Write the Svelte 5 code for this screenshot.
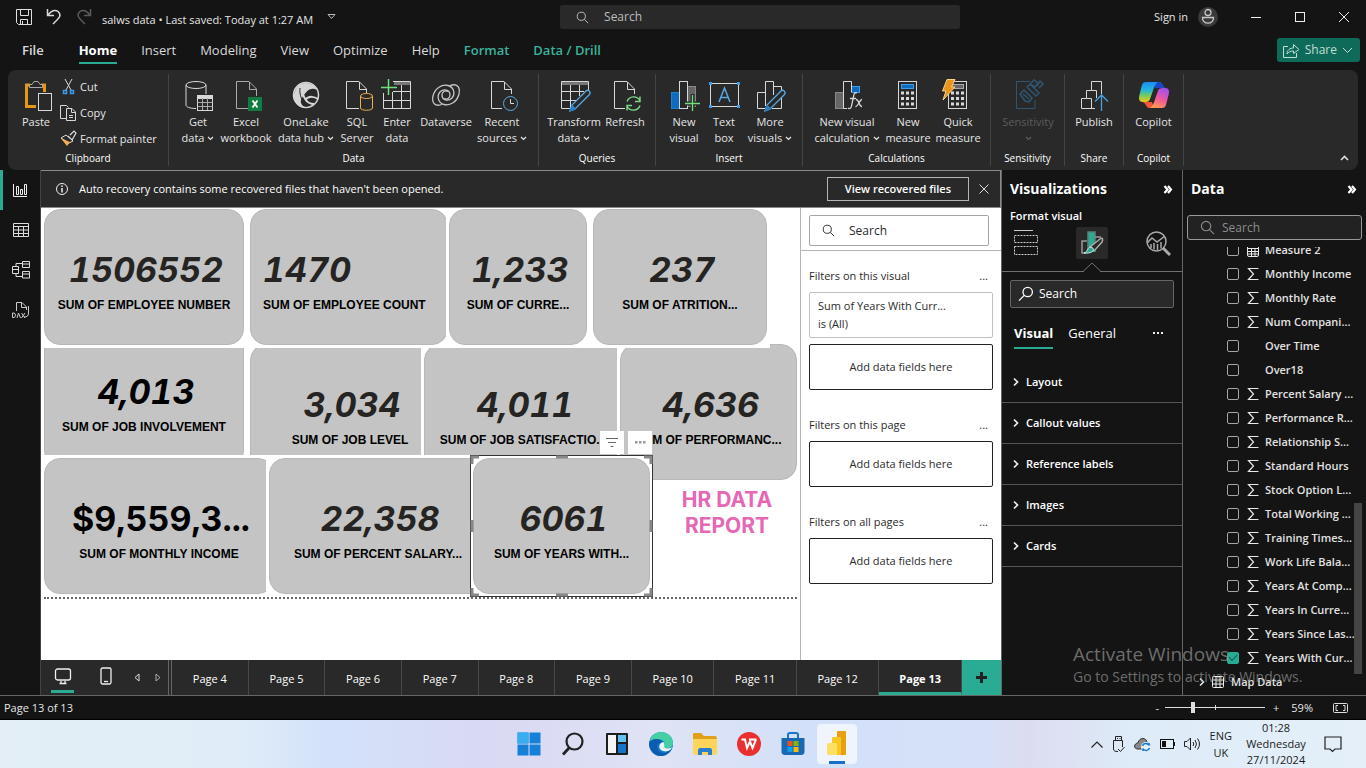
<script>
  const tabs = ['Insert', 'Modeling', 'View', 'Optimize', 'Help'];
  const groups = [
    {
      name: 'Data', width: 370, pad: 9, items: [
        { icon: 'getdata', lines: ['Get', 'data'], width: 40, menu: true },
        { icon: 'excel', lines: ['Excel', 'workbook'], width: 56 },
        { icon: 'onelake', lines: ['OneLake', 'data hub'], width: 64, menu: true },
        { icon: 'sql', lines: ['SQL', 'Server'], width: 38 },
        { icon: 'enter', lines: ['Enter', 'data'], width: 42 },
        { icon: 'dataverse', lines: ['Dataverse'], width: 56 },
        { icon: 'recent', lines: ['Recent', 'sources'], width: 56, menu: true }
      ]
    },
    {
      name: 'Queries', width: 117, pad: 6, items: [
        { icon: 'transform', lines: ['Transform', 'data'], width: 58, menu: true },
        { icon: 'refresh', lines: ['Refresh'], width: 44 }
      ]
    },
    {
      name: 'Insert', width: 147, pad: 8, items: [
        { icon: 'newvisual', lines: ['New', 'visual'], width: 40 },
        { icon: 'textbox', lines: ['Text', 'box'], width: 40 },
        { icon: 'morevisuals', lines: ['More', 'visuals'], width: 52, menu: true }
      ]
    },
    {
      name: 'Calculations', width: 188, pad: 7, items: [
        { icon: 'viscalc', lines: ['New visual', 'calculation'], width: 74, menu: true },
        { icon: 'measure', lines: ['New', 'measure'], width: 48 },
        { icon: 'quick', lines: ['Quick', 'measure'], width: 52 }
      ]
    },
    { name: 'Sensitivity', width: 74, pad: 8, items: [{ icon: 'sensitivity', lines: ['Sensitivity', ''], width: 58, menu: true, off: true }] },
    { name: 'Share', width: 59, pad: 4, items: [{ icon: 'publish', lines: ['Publish'], width: 50 }] },
    { name: 'Copilot', width: 60, pad: 4, items: [{ icon: 'copilot', lines: ['Copilot'], width: 51 }] }
  ];

  // Visuals on the report canvas: position and size in canvas units.
  const visuals = [
    { x: 0, y: 120, w: 206, z: 1, value: '4,013', label: 'SUM OF JOB INVOLVEMENT', dark: true },
    { x: 206, y: 133, w: 206, z: 1, value: '3,034', label: 'SUM OF JOB LEVEL' },
    { x: 380, y: 133, w: 204, z: 1, value: '4,011', label: 'SUM OF JOB SATISFACTIO...' },
    { x: 576, y: 133, w: 183, z: 1, value: '4,636', label: 'SUM OF PERFORMANC...' },
    { x: 0, y: -2, w: 206, z: 2, value: '1506552', label: 'SUM OF EMPLOYEE NUMBER' },
    { x: 206, y: -2, w: 204, z: 2, value: '1470', label: 'SUM OF EMPLOYEE COUNT', left: true },
    { x: 405, y: -2, w: 144, z: 2, value: '1,233', label: 'SUM OF CURRE...' },
    { x: 549, y: -2, w: 180, z: 2, value: '237', label: 'SUM OF ATRITION...' },
    { x: 0, y: 247, w: 236, z: 3, value: '$9,559,3...', label: 'SUM OF MONTHLY INCOME', dark: true, upright: true },
    { x: 225, y: 247, w: 224, z: 3, value: '22,358', label: 'SUM OF PERCENT SALARY...' },
    { x: 429, y: 247, w: 183, z: 4, value: '6061', label: 'SUM OF YEARS WITH...', selected: true }
  ];

  const pages = ['Page 4', 'Page 5', 'Page 6', 'Page 7', 'Page 8', 'Page 9', 'Page 10', 'Page 11', 'Page 12', 'Page 13'];
  const sections = ['Layout', 'Callout values', 'Reference labels', 'Images', 'Cards'];
  const fields = [
    { name: 'Measure 2', kind: 'calc' },
    { name: 'Monthly Income', kind: 'sum' },
    { name: 'Monthly Rate', kind: 'sum' },
    { name: 'Num Compani...', kind: 'sum' },
    { name: 'Over Time' },
    { name: 'Over18' },
    { name: 'Percent Salary ...', kind: 'sum' },
    { name: 'Performance R...', kind: 'sum' },
    { name: 'Relationship S...', kind: 'sum' },
    { name: 'Standard Hours', kind: 'sum' },
    { name: 'Stock Option L...', kind: 'sum' },
    { name: 'Total Working ...', kind: 'sum' },
    { name: 'Training Times...', kind: 'sum' },
    { name: 'Work Life Bala...', kind: 'sum' },
    { name: 'Years At Comp...', kind: 'sum' },
    { name: 'Years In Curre...', kind: 'sum' },
    { name: 'Years Since Las...', kind: 'sum' },
    { name: 'Years With Cur...', kind: 'sum', checked: true }
  ];
  const apps = ['start', 'find', 'widgets', 'edge', 'files', 'wps', 'store', 'powerbi'];
</script>

{#snippet chev()}
  <svg class="chev" width="7" height="5" viewBox="0 0 7 5"><path d="M1 1l2.5 2.5L6 1" fill="none" stroke="currentColor" stroke-width="1.2" /></svg>
{/snippet}

{#snippet lens(size)}
  <svg width={size} height={size} viewBox="0 0 16 16" fill="none" stroke="currentColor" stroke-width="1.2"><circle cx="6.5" cy="6.5" r="5" /><path d="M10.2 10.2L15 15" /></svg>
{/snippet}

{#snippet lensLeft()}
  <svg width="16" height="16" viewBox="0 0 16 16" fill="none" stroke="currentColor" stroke-width="1.3"><circle cx="9.7" cy="6" r="4.7" /><path d="M6.2 9.4L1 14.6" /></svg>
{/snippet}

{#snippet ribbonIcon(name)}
  <svg width="32" height="32" viewBox="0 0 32 32" fill="none" stroke="#d8d8d8">
    {#if name === 'paste'}
      <path d="M10 5H6.500V26.500H16M21 5H24.500V12" stroke="#e8951c" stroke-width="3" />
      <path d="M9.500 7.500V4.500H12L14 1.500H18L20 4.500H22.500V7.500Z" fill="#292929" stroke="#aaa" />
      <rect x="18.500" y="13.500" width="13" height="17" fill="#292929" />
    {:else if name === 'getdata'}
      <ellipse cx="14" cy="5" rx="10" ry="3.500" />
      <path d="M4 5V25C4 27 8 28.500 14 28.500M24 5V14" />
      <rect x="15.500" y="15.500" width="15" height="15" fill="#292929" /><path d="M15.500 17.500H30.500" stroke-width="3" /><path d="M15.500 22.500H30.500M15.500 26.500H30.500M20.500 18V30M25.500 18V30" stroke="#aaa" />
    {:else if name === 'excel'}
      <path d="M18 28.500H6.500V1.500H19L26.500 9V16M19.500 2V9.500H26.500" stroke="#aaa" />
      <rect x="18" y="17" width="14" height="14" fill="#107c41" stroke="none" /><path d="M22.500 20.500L27.500 27.500M27.500 20.500L22.500 27.500" stroke="#fff" stroke-width="1.800" />
    {:else if name === 'onelake'}
      <circle cx="16" cy="15" r="12.500" fill="#292929" stroke-width="1.500" />
      <path d="M11 4C18 1 25 5 27 10C21 7 17 10 12 18C9 22 12 26 16 28C8 28 3 22 4 14C5 9 8 5 11 4Z" fill="#d5d5d5" stroke="none" />
      <path d="M12 8C13 18 17 24 24 24M15 20C19 15 25 17 28 19" stroke-width="2" /><path d="M10 8C9 14 12 22 17 27" stroke="#292929" />
    {:else if name === 'sql'}
      <path d="M18 28.500H5.500V1.500H18L25.500 9V13M18.500 2V9.500H25.500" />
      <path d="M19.500 16V28C19.500 31 31.500 31 31.500 28V16" fill="#292929" stroke="#f0ad51" /><ellipse cx="25.500" cy="16" rx="6" ry="2.500" fill="#292929" stroke="#f0ad51" />
    {:else if name === 'enter'}
      <path d="M12 1.500H29.500V28.500H2.500V13M11 20.500H29.500M2.500 20.500H11M12 11.500H29.500M11.500 12V28.500M20.500 5V28.500" /><path d="M13 3.500H29" stroke="#777" stroke-width="3" />
      <path d="M7.500 -1V15M0 7.500H16" stroke="#6fe07c" stroke-width="1.500" />
    {:else if name === 'dataverse'}
      <g stroke="#c8c8c8" stroke-width="1.300"><path d="M12 24.500C5 27 1.500 23 3 16C5 8 12 4 18 5.500C24 7 25.500 14 22 18C18 22 12 20 12 15C12 12 15 10 18 11.500" /><path d="M20 5.500C27 3 30.500 7 29 14C27 22 20 26 14 24.500C8 23 6.500 16 10 12C14 8 20 10 20 15C20 18 17 20 14 18.500" /></g>
    {:else if name === 'recent'}
      <path d="M16 28.500H5.500V1.500H18L25.500 9V14M18.500 2V9.500H25.500" />
      <circle cx="24.500" cy="23.500" r="7" stroke="#5aa9e0" /><path d="M24.500 19V23.500H28" />
    {:else if name === 'transform'}
      <path d="M16 28.500H3.500V1.500H30.500V10M3.500 11.500H26M3.500 20.500H18M12.500 5V28.500M21.500 5V16" /><path d="M4 3.500H30" stroke="#777" stroke-width="3" />
      <path d="M12 31L14 25L28 11C30 9 34 12 31 15L17 29Z" fill="#292929" stroke="#5aa9e0" stroke-width="1.300" /><path d="M12 31L14 25L18 29Z" fill="#2b7fc5" stroke="#2b7fc5" />
    {:else if name === 'refresh'}
      <path d="M16 28.500H5.500V1.500H18L25.500 9V14M18.500 2V9.500H25.500" />
      <g stroke="#7bd889" stroke-width="1.400"><path d="M18 21.500A7 7 0 0 1 31 21M31 16.500V21.500H26M31 25.500A7 7 0 0 1 18 26M18 30.500V25.500H23" /></g>
    {:else if name === 'newvisual'}
      <rect x="3.500" y="12.500" width="8" height="16" fill="#0f6cbd" stroke="#1683d8" /><rect x="19.500" y="6.500" width="8" height="20" fill="#666" stroke="#888" /><rect x="11.500" y="1.500" width="8" height="27" fill="#292929" />
      <path d="M24.500 14V31M16 23.500H32" stroke="#292929" stroke-width="4" /><path d="M24.500 15V31M17 23.500H32" stroke="#6fe07c" stroke-width="1.300" />
    {:else if name === 'textbox'}
      <rect x="2.500" y="3.500" width="28" height="23" /><path d="M11 22L16.500 8L22 22M13 17.500H20" stroke="#5aa9e0" stroke-width="1.500" />
      <path d="M1 2h3v3H1zM29 2h3v3h-3zM1 25h3v3H1zM29 25h3v3h-3z" fill="#3d9be9" stroke="none" />
    {:else if name === 'morevisuals'}
      <path d="M11 28.500H3.500V12.500H11.500M11.500 26V1.500H19.500V15M19.500 6.500H27.500V10M18 28.500H27.500V18" />
      <path d="M11 31L13 25L27 11C29 9 33 12 30 15L16 29Z" fill="#292929" stroke="#5aa9e0" stroke-width="1.300" /><path d="M11 31L13 25L17 29Z" fill="#2b7fc5" stroke="#2b7fc5" />
    {:else if name === 'viscalc'}
      <rect x="4.500" y="12.500" width="8" height="16" fill="#666" stroke="#888" /><rect x="20.500" y="6.500" width="8" height="6" fill="#0f6cbd" stroke="#3d9be9" /><path d="M20.500 12V1.500H12.500V28.500H16" />
      <path d="M26 13C23 12 23 14 22.500 17L20.500 26C20 29 18 29 17 28M19 18.500H25M25 19.500C28 19 28 27 31 26.500M31 19.500C29 19 27 27 24.500 26.500" stroke-width="1.300" />
    {:else if name === 'measure' || name === 'quick'}
      <rect x="6.500" y="1.500" width="18" height="27" />
      <rect x="9.500" y="4.500" width="12" height="4" fill={name === 'measure' ? '#0f6cbd' : '#666'} stroke={name === 'measure' ? '#3d9be9' : '#aaa'} />
      <path d="M9 13H22M9 18.500H22M9 24H22" stroke-width="3" stroke-dasharray="3 2" />
      {#if name === 'quick'}<path d="M5 -.5H13L9.500 7H13L1 20L4 11H.5Z" fill="#e8951c" stroke="#fbd18a" />{/if}
    {:else if name === 'sensitivity'}
      <g stroke="#2f5570"><path d="M23 20V28.500H4.500V1.500H18" /><path d="M8 14L12 10L20 18L17 22L13 21ZM11 14L17 19" stroke-width="1.500" /><path d="M15 7L18 4L27 13L24 16ZM18 4L22 0L26 3L23 7ZM25 6L28 1L31 4L27 8" stroke-width="1.500" /></g>
    {:else if name === 'publish'}
      <path d="M17 28.500H3.500V18.500H8.500V10.500H13.500V1.500H23.500V14M8.500 18.500H13.500V28.500M13.500 10.500H18.500V18" /><path d="M23.500 31V15M17 21.500L23.500 15L30 21.500" stroke="#4a9fdc" stroke-width="1.300" />
    {:else if name === 'copilot'}
      <defs>
        <linearGradient id="cpa" x1="0" y1="0" x2="0" y2="1"><stop offset="0" stop-color="#1a8df0" /><stop offset=".4" stop-color="#26b5dc" /><stop offset=".7" stop-color="#7ccb58" /><stop offset="1" stop-color="#f5cc16" /></linearGradient>
        <linearGradient id="cpb" x1=".6" y1="0" x2=".2" y2="1"><stop offset="0" stop-color="#a64ff0" /><stop offset=".5" stop-color="#ef5a9a" /><stop offset="1" stop-color="#ffa04a" /></linearGradient>
      </defs>
      <path d="M17 2H22C25 2 25 8 28 8H17Z" fill="#1b48c8" stroke="none" /><path d="M4 22H14L16 28H11C8 28 8 22 4 22Z" fill="#f2583e" stroke="none" />
      <path d="M8 2H20C16 4 15 12 12 19C11 22 9 22 5 22C1 22 0 19 2 13C4 5 4 2 8 2Z" fill="url(#cpa)" stroke="none" />
      <path d="M24 28H12C16 26 17 18 20 11C21 8 23 8 27 8C31 8 32 11 30 17C28 25 28 28 24 28Z" fill="url(#cpb)" stroke="none" />
    {/if}
  </svg>
{/snippet}

{#snippet appIcon(name)}
  <svg width="26" height="26" viewBox="0 0 26 26" fill="none">
    {#if name === 'start'}
      <path d="M1.500 1.500h11v11h-11zM13.500 1.500h11v11h-11zM1.500 13.500h11v11h-11zM13.500 13.500h11v11h-11z" fill="#1580d8" /><path d="M1.500 1.500h11v11h-11z" fill="#38aef0" />
    {:else if name === 'find'}
      <circle cx="14.500" cy="10.500" r="8" stroke="#222" stroke-width="2.200" /><path d="M9 17L3 23.500" stroke="#222" stroke-width="2.800" />
    {:else if name === 'widgets'}
      <rect x="2" y="2" width="22" height="22" rx="1" fill="#1e1e1e" /><path d="M4 4h8v18H4z" fill="#f5f5f5" /><path d="M14 4h8v7h-8z" fill="#67c0f2" /><path d="M14 13h8v9h-8z" fill="#1573c9" />
    {:else if name === 'edge'}
      <circle cx="13" cy="13" r="12" fill="#1377cf" /><path d="M1.500 11C3 4 8 1 13 1C20 1 25 6 25 12C25 16 21 18 17 17C14 16 17 15 16.500 12C15.500 8 6 6 1.500 11Z" fill="#45d0a4" /><path d="M1.500 11C6 6 14 8 15 12C10 11 8 15 10 19C12 23 19 23 23 19C18 27 7 27 3 19C1 16 1 13 1.500 11Z" fill="#0e5cae" /><path d="M15 11C18 13 15 15 17 17C20 18 23 17 24 16C23 20 17 22 13 19C10 17 11 12 15 11Z" fill="#eaf5fc" />
    {:else if name === 'files'}
      <path d="M1 3C1 2 2 2 3 2H9L12 5H23C24 5 25 6 25 7V22H1Z" fill="#e0a017" /><path d="M1 8H25V22C25 23 24 24 23 24H3C2 24 1 23 1 22Z" fill="#ffd45a" /><path d="M6 24V19C6 18 7 17 8 17H18C19 17 20 18 20 19V24H16V21H10V24Z" fill="#267fd1" />
    {:else if name === 'wps'}
      <circle cx="13" cy="13" r="12" fill="#e92f2f" /><path d="M5.500 8.500H9L11 17L14 10.500L16.500 17L20 8.500M13 8.500H20.500" stroke="#fff" stroke-width="2" />
    {:else if name === 'store'}
      <path d="M8 7V3.500C8 2 9 2 10 2H16C17 2 18 2 18 3.500V7" stroke="#1676cc" stroke-width="2" /><path d="M1.500 7H24.500V21C24.500 23 23 24 21 24H5C3 24 1.500 23 1.500 21Z" fill="#1868b4" />
      <path d="M7.500 10h5v5h-5z" fill="#f25022" /><path d="M13.500 10h5v5h-5z" fill="#7fba00" /><path d="M7.500 16h5v5h-5z" fill="#00a4ef" /><path d="M13.500 16h5v5h-5z" fill="#ffb900" />
    {:else}
      <rect x="13" y="1" width="9" height="24" rx="1" fill="#e6a010" /><rect x="8" y="7" width="9" height="18" rx="1" fill="#f6c821" /><path d="M4 13H11C12 13 13 14 13 15V25H5C4 25 3 24 3 23V14Z" fill="#fbe063" />
    {/if}
  </svg>
{/snippet}

<div class="app">
  <header class="titlebar">
    <div class="file-info">
      <button aria-label="Save"><svg width="16" height="16" viewBox="0 0 16 16" fill="none" stroke="#e0e0e0"><path d="M.5.500H15.500V15.500H2.500L.5 13.500ZM4.500.500V6.500H12.500V.5M4.500 15V10.500H11.500V15M6.500 12V15" /></svg></button>
      <button aria-label="Undo"><svg width="16" height="16" viewBox="0 0 16 16" fill="none" stroke="#d8d8d8" stroke-width="1.500"><path d="M1.500 0V6.500H8M2 6C5 2 9 0 12 2.500C16 6 13 9 11 11L7 15" /></svg></button>
      <button aria-label="Redo"><svg width="16" height="16" viewBox="0 0 16 16" fill="none" stroke="#5a5a5a" stroke-width="1.500"><path d="M14.500 0V6.500H8M14 6C11 2 7 0 4 2.500C0 6 3 9 5 11L9 15" /></svg></button>
      <span>salws data • Last saved: Today at 1:27 AM</span>
      <svg width="9" height="6" viewBox="0 0 9 6" fill="none" stroke="#bbb"><path d="M1 .500H8L4.500 4.500Z" /></svg>
    </div>
    <label class="top-search">{@render lens(13)}<input type="text" placeholder="Search" aria-label="Search commands" /></label>
    <div class="account">
      <button class="signin">Sign in <svg width="20" height="20" viewBox="0 0 20 20"><circle cx="10" cy="10" r="10" fill="#3a3a3a" /><g fill="none" stroke="#c8c8c8" stroke-width="1.300"><circle cx="10" cy="5.500" r="3" /><path d="M4.500 10.500H15.500C16 18 4 18 4.500 10.500Z" /></g></svg></button>
      <button aria-label="Minimize"><svg width="12" height="12" viewBox="0 0 12 12" stroke="#eee"><path d="M1 6.500H11" /></svg></button>
      <button aria-label="Maximize"><svg width="12" height="12" viewBox="0 0 12 12" fill="none" stroke="#eee"><rect x="1.500" y="1.500" width="9" height="9" /></svg></button>
      <button aria-label="Close"><svg width="12" height="12" viewBox="0 0 12 12" stroke="#eee"><path d="M1 1L11 11M11 1L1 11" /></svg></button>
    </div>
  </header>

  <nav class="menu">
    <button class="file">File</button>
    <button class="active">Home</button>
    {#each tabs as t}<button>{t}</button>{/each}
    <button class="ctx">Format</button>
    <button class="ctx">Data / Drill</button>
    <button class="share"><svg width="17" height="15" viewBox="0 0 17 15" fill="none" stroke="#c4dcd6"><path d="M5 3.500H.5V14.500H13.500V10M4 11C4 7 7 5 10.500 5V1.500L16 6.500L10.500 10.500V8C8 8 6 8.500 4 11Z" /></svg>Share<svg width="11" height="7" viewBox="0 0 11 7" fill="none" stroke="#c4dcd6"><path d="M1 1L5.500 5.500L10 1" /></svg></button>
  </nav>

  <section class="ribbon">
    <div class="group clip">
      <div class="items">
        <button class="tool paste">{@render ribbonIcon('paste')}<span>Paste</span></button>
        <div class="stack">
          <button><svg width="17" height="16" viewBox="0 0 17 16" fill="none" stroke="#d8d8d8"><path d="M5 0L11 11M12 0L6 11" /><g stroke="#3d9be9" stroke-width="1.500"><rect x="3.500" y="11.500" width="3" height="3" /><rect x="10.500" y="11.500" width="3" height="3" /></g></svg>Cut</button>
          <button><svg width="17" height="16" viewBox="0 0 17 16" fill="none" stroke="#d8d8d8"><path d="M6 13.500H.5V.5H6.500L8.500 2.500M6.500 3.500H12L15.500 7V15.500H6.500ZM11.500 4V7.500H15M9 10.500H13M9 12.500H13" /></svg>Copy</button>
          <button><svg width="17" height="16" viewBox="0 0 17 16"><path d="M8 5L12 9L16 2L14 0L10 4" fill="#292929" stroke="#ddd" stroke-width="1.200" /><path d="M1 7L6 4L13 10L9 12Z" fill="#292929" stroke="#ddd" /><path d="M1 7.500L10 11L7 15Z" fill="#f5b04c" /></svg>Format painter</button>
        </div>
      </div>
      <div class="gname">Clipboard</div>
    </div>
    {#each groups as g}
      <div class="group" style="width:{g.width}px">
        <div class="items" style="padding-left:{g.pad}px">
          {#each g.items as it}
            <button class="tool" class:off={it.off} style="width:{it.width}px">
              {@render ribbonIcon(it.icon)}
              {#each it.lines as line, i}
                <span>{line}{#if it.menu && i === 1}{@render chev()}{/if}</span>
              {/each}
            </button>
          {/each}
        </div>
        <div class="gname">{g.name}</div>
      </div>
    {/each}
    <button class="collapse" aria-label="Collapse ribbon"><svg width="9" height="6" viewBox="0 0 9 6" fill="none" stroke="#ddd" stroke-width="1.600"><path d="M1 5L4.500 1.500L8 5" /></svg></button>
  </section>

  <main>
    <aside class="rail">
      <button class="on" aria-label="Report view"><svg width="16" height="16" viewBox="0 0 16 16" fill="none" stroke="#eee"><path d="M.5 2V14.500H14M3.500 4.500H5.500V12.500H3.500ZM7.500 7.500H9.500V12.500H7.500ZM11.500 2.500H13.500V12.500H11.500Z" /></svg></button>
      <button aria-label="Table view"><svg width="16" height="16" viewBox="0 0 16 16" fill="none" stroke="#ddd"><path d="M.5 1.500H15.500V14.500H.5ZM.5 4.500H15.500M.5 8H15.500M.5 11.500H15.500M5.500 4V14M10.500 4V14" /></svg></button>
      <button aria-label="Model view"><svg width="18" height="18" viewBox="0 0 18 18" fill="none" stroke="#ddd"><path d="M.5 5.500H6.500V12.500H.5ZM.5 8.500H6.500M10.500.5H17.500V6.500H10.500ZM10.500 3H17.500M10.500 10.500H17.500V17H10.500ZM10.500 13H17.500M4 5V2.500H10.500M4 13V15.500H10.500" /></svg></button>
      <button aria-label="DAX query view"><svg width="20" height="18" viewBox="0 0 20 18" fill="none" stroke="#ccc"><path d="M5.500 10V1.500H11L15.500 6V9M10.500 2V6.500H15M17.500 5V12C17.500 15 16 16 13 16" /><path d="M1.500 12V16.500H3C5 16 5 12.500 3 12ZM6 17L7.500 12L9.500 17M10.500 12L14 17M14 12L10.500 17" /></svg></button>
    </aside>

    <div class="center">
      <div class="banner">
        <svg width="14" height="14" viewBox="0 0 14 14" fill="none" stroke="#eee"><circle cx="7" cy="7" r="5.500" /><path d="M7 3.500V5M7 6V10.500" stroke-width="1.500" /></svg>
        <span>Auto recovery contains some recovered files that haven't been opened.</span>
        <button class="view">View recovered files</button>
        <button aria-label="Dismiss"><svg width="10" height="10" viewBox="0 0 10 10" stroke="#ddd"><path d="M.5.5L9.500 9.500M9.500.5L.5 9.500" /></svg></button>
      </div>
      <div class="work">
        <div class="canvas">
          {#each visuals as v}
            <div class="visual" class:selected={v.selected} style="left:{v.x}px;top:{v.y}px;width:{v.w}px;z-index:{v.z}">
              <div class="card" class:left={v.left} class:dark={v.dark}>
                <div class="value" class:upright={v.upright}>{v.value}</div>
                <div class="label">{v.label}</div>
              </div>
              {#if v.selected}
                <svg class="handles" width="183" height="142" viewBox="0 0 183 142" fill="none" stroke="#888" stroke-width="3"><path d="M2 9V2H9M174 2H181V9M181 133V140H174M9 140H2V133M86 2H98M86 140H98M2 65V77M181 65V77" /></svg>
                <div class="tools">
                  <button aria-label="Filters"><svg width="12" height="10" viewBox="0 0 12 10" stroke="#666"><path d="M0 .500H12M2 4.500H10M4.500 8.500H7.500" /></svg></button>
                  <button aria-label="More options"><svg width="11" height="3" viewBox="0 0 11 3" fill="#999"><path d="M0 0h2.500v2.500H0zM4 0h2.500v2.500H4zM8 0h2.500v2.500H8z" /></svg></button>
                </div>
              {/if}
            </div>
          {/each}
          <div class="report-title">HR DATA<br />REPORT</div>
          <div class="page-edge"></div>
        </div>
        <aside class="filters">
          <div class="fsearch"><label>{@render lens(13)}<input type="text" placeholder="Search" aria-label="Search filters" /></label></div>
          <div class="fgroup">
            <h3>Filters on this visual <button aria-label="More">...</button></h3>
            <div class="fcard">Sum of Years With Curr...<br />is (All)</div>
            <button class="drop">Add data fields here</button>
          </div>
          <div class="fgroup"><h3>Filters on this page <button aria-label="More">...</button></h3><button class="drop">Add data fields here</button></div>
          <div class="fgroup"><h3>Filters on all pages <button aria-label="More">...</button></h3><button class="drop">Add data fields here</button></div>
        </aside>
      </div>
      <div class="pages">
        <div class="layouts">
          <button class="on" aria-label="Desktop layout"><svg width="18" height="18" viewBox="0 0 18 18" fill="none" stroke="#eee" stroke-width="1.300"><rect x="1.500" y="0" width="15" height="11" rx="2" /><path d="M5.500 14.500H12.500M7 12V14M11 12V14" /></svg></button>
          <button aria-label="Mobile layout"><svg width="12" height="22" viewBox="0 0 12 22" fill="none" stroke="#eee" stroke-width="1.300"><rect x="1" y="1" width="10" height="16" rx="1.500" /><path d="M4 14.500H8" /></svg></button>
          <button aria-label="Previous pages"><svg width="6" height="9" viewBox="0 0 6 9" fill="none" stroke="#ddd"><path d="M5 1V8L1 4.500Z" /></svg></button>
          <button aria-label="Next pages"><svg width="6" height="9" viewBox="0 0 6 9" fill="none" stroke="#aaa"><path d="M1 1V8L5 4.500Z" /></svg></button>
        </div>
        {#each pages as p}<button class="page" class:long={p.length > 6} class:current={p === 'Page 13'}>{p}</button>{/each}
        <button class="add" aria-label="New page"><svg width="11" height="11" viewBox="0 0 11 11" stroke="#222" stroke-width="3"><path d="M5.500 0V11M0 5.500H11" /></svg></button>
      </div>
    </div>

    <aside class="viz">
      <div class="ptitle"><h2>Visualizations</h2><button aria-label="Collapse"><svg width="8" height="9" viewBox="0 0 8 9" fill="none" stroke="#fff" stroke-width="2.200"><path d="M.5 1L3.500 4.500L.5 8M4 1L7 4.500L4 8" /></svg></button></div>
      <h3>Format visual</h3>
      <div class="modes">
        <button aria-label="Build visual"><svg width="26" height="26" viewBox="0 0 26 26" fill="none" stroke="#ccc"><path d="M1 .5H20" /><path d="M1.500 5.500H24.500V12.500H1.500ZM1.500 16.500H24.500V24.500H1.500Z" stroke-dasharray="2 1" /></svg></button>
        <button class="on" aria-label="Format visual"><svg width="24" height="24" viewBox="0 0 24 24" fill="none" stroke="#999" stroke-width="1.500"><path d="M6 22H2V10H7" /><path d="M8 1H15V20H8Z" fill="#2aab94" stroke="#5a837c" /><path d="M15 6H21" /><path d="M10 16L20 8C23 6 23 9 22 11L14 20Z" fill="#292929" stroke="#aaa" /><path d="M4 22C8 21 7 16 11 16C15 17 15 23 4 22Z" fill="#2aab94" stroke="#d0eee8" stroke-width="1" /></svg></button>
        <button aria-label="Analytics"><svg width="25" height="25" viewBox="0 0 25 25" fill="none" stroke="#aaa"><circle cx="10.500" cy="10.500" r="9.500" stroke-width="1.500" /><path d="M1 12L6 7L11 11L19 5M5 13V17M8 12V18.500M11.500 13V19M15 11V17.500" stroke-width="1.500" /><path d="M17 17L24 24" stroke-width="3" /></svg></button>
      </div>
      <div class="rule"><svg width="18" height="10" viewBox="0 0 18 10"><path d="M1 9L9 1L17 9V10H1Z" fill="#141414" /><path d="M0 9.500L9 1L18 9.500" fill="none" stroke="#707070" /></svg></div>
      <label class="vsearch">{@render lensLeft()}<input type="text" placeholder="Search" aria-label="Search formatting" /></label>
      <div class="vtabs"><button class="on">Visual</button><button>General</button><button class="dots" aria-label="More"><svg width="11" height="3" viewBox="0 0 11 3" fill="#eee"><path d="M0 0h2v2H0zM4 0h2v2H4zM8 0h2v2H8z" /></svg></button></div>
      <div class="sections">
        {#each sections as s}
          <button><svg width="6" height="8" viewBox="0 0 6 8" fill="none" stroke="#eee" stroke-width="1.700"><path d="M1 .500L4.500 4L1 7.500" /></svg>{s}</button>
        {/each}
      </div>
    </aside>

    <aside class="data">
      <div class="ptitle"><h2>Data</h2><button aria-label="Collapse"><svg width="8" height="9" viewBox="0 0 8 9" fill="none" stroke="#fff" stroke-width="2.200"><path d="M.5 1L3.500 4.500L.5 8M4 1L7 4.500L4 8" /></svg></button></div>
      <label class="dsearch">{@render lens(15)}<input type="text" placeholder="Search" aria-label="Search fields" /></label>
      <div class="list">
        {#each fields as f}
          <label class="field">
            <input type="checkbox" checked={f.checked} />
            <svg width="12" height="14" viewBox="0 0 12 14" fill="none" stroke="#e8e8e8">
              {#if f.kind === 'sum'}<path d="M11.500 1.500H1.500L6.500 7L1.500 12.500H11.500" stroke-width="1.200" />
              {:else if f.kind === 'calc'}<rect x=".5" y="2.500" width="11" height="11" rx="1.500" /><path d="M1 5.500H11M1 8.500H11M1 11H11M4.500 5V13M8 5V13" />{/if}
            </svg>
            <span>{f.name}</span>
          </label>
        {/each}
        <button class="table-row"><svg width="6" height="8" viewBox="0 0 6 8" fill="none" stroke="#eee" stroke-width="1.500"><path d="M1 .5L4.500 4L1 7.500" /></svg><svg width="12" height="12" viewBox="0 0 12 12" fill="none" stroke="#eee"><rect x=".5" y=".5" width="11" height="11" rx="1" /><path d="M0 4H12M0 8H12M4 0V12M8 0V12" /></svg>Map Data</button>
        <div class="thumb"></div>
      </div>
    </aside>

    <div class="watermark"><b>Activate Windows</b>Go to Settings to activate Windows.</div>
  </main>

  <footer class="status">
    <span>Page 13 of 13</span>
    <div class="zoom">
      <button aria-label="Zoom out">-</button>
      <input type="range" min="0" max="100" value="27" aria-label="Zoom level" />
      <button aria-label="Zoom in">+</button>
      <span>59%</span>
      <button aria-label="Fit to page"><svg width="15" height="10" viewBox="0 0 15 10" fill="none" stroke="#ddd"><rect x=".5" y=".5" width="14" height="9" rx="1" /><path d="M5 2.500H3V7.500H5M10 2.500H12V7.500H10" /></svg></button>
    </div>
  </footer>

  <div class="taskbar">
    <div class="apps">
      {#each apps as a}<button class:running={a === 'powerbi'} aria-label={a}>{@render appIcon(a)}</button>{/each}
    </div>
    <div class="tray">
      <svg width="12" height="7" viewBox="0 0 12 7" fill="none" stroke="#222" stroke-width="1.200"><path d="M.5 6.500L6 1L11.500 6.500" /></svg>
      <svg width="13" height="18" viewBox="0 0 13 18" fill="none" stroke="#222"><path d="M3.500 6V1.500H9.500V6M5 3.500H6M7.500 3.500H8.500M1.500 5.500H10.500V12M1.500 5.500V14C1.500 16 3 16.500 6 16.500M6 14L8.500 16.500L12.500 12" /></svg>
      <svg width="17" height="15" viewBox="0 0 17 15"><path d="M4 12C-1 12 0 6 4 6C5 0 13 0 13 6C16 6 17 9 15 11L13 12Z" fill="#888" stroke="#333" /><circle cx="12" cy="10" r="5" fill="#e8f2fa" /><path d="M8.500 9A3.500 3.500 0 0 1 15 8.500V6M15.500 11A3.500 3.500 0 0 1 9 11.500V14" fill="none" stroke="#1475d0" stroke-width="1.500" /></svg>
      <svg width="15" height="10" viewBox="0 0 15 10"><rect x=".5" y=".5" width="13" height="9" fill="none" stroke="#111" /><path d="M2 2h4v6H2zM14 3h1v4h-1z" fill="#111" /></svg>
      <svg width="17" height="14" viewBox="0 0 17 14" fill="none" stroke="#222"><path d="M.5 4.500H3L6.500 1V13L3 9.500H.5ZM9 5Q10.500 7 9 9M11 3Q14 7 11 11M13.500 1.500Q17.500 7 13.500 12.500" /></svg>
      <div class="stacked lang"><span>ENG</span><span>UK</span></div>
      <div class="stacked clock"><span>01:28</span><span>Wednesday</span><span>27/11/2024</span></div>
      <svg width="18" height="17" viewBox="0 0 18 17" fill="none" stroke="#222" stroke-width="1.200"><path d="M1 1H17V13H11L8.500 15.500L6 13H1Z" /></svg>
    </div>
  </div>
</div>

<style>
  :global(body) { margin: 0; background: #141414; }
  .app { min-height: 100vh; display: flex; flex-direction: column; background: #141414; color: #e6e6e6; font: 11px/16px "Open Sans", "Noto Sans", sans-serif; overflow: hidden; }
  .app * { box-sizing: border-box; }
  button { background: none; border: 0; padding: 0; color: inherit; font: inherit; display: inline-flex; align-items: center; justify-content: center; white-space: nowrap; }
  input { background: none; border: 0; padding: 0; margin: 0; color: inherit; font: inherit; outline: 0; min-width: 0; }
  input::placeholder { color: inherit; opacity: 1; }
  svg { flex: none; display: block; overflow: visible; }
  h2, h3 { margin: 0; }

  .titlebar { height: 34px; flex: none; display: grid; grid-template-columns: 41% 400px 1fr; align-items: center; }
  .file-info { display: flex; align-items: center; padding-left: 16px; gap: 14px; white-space: nowrap; }
  .file-info span { margin: 5px 0 0 -4px; }
  .top-search { height: 24px; background: #292929; display: flex; align-items: center; gap: 15px; padding-left: 16px; color: #bdbdbd; font-size: 12px; border-radius: 2px; }
  .account { display: flex; justify-content: flex-end; align-items: center; gap: 32px; padding-right: 16px; }
  .signin { gap: 10px; }

  .menu { height: 36px; flex: none; display: flex; align-items: center; padding: 0 6px 4px 22px; gap: 24px; font-size: 13px; color: #dadada; }
  .menu button { height: 28px; }
  .menu .file { margin-right: 11px; font-weight: 600; }
  .menu .active { font-weight: 700; color: #fff; box-shadow: inset 0 -2px #2aab94; }
  .menu .ctx { color: #3bb39c; font-weight: 600; }
  .menu .share { height: 24px; background: #0f6b59; border-radius: 3px; margin-left: auto; padding: 0 7px 0 6px; gap: 5px; color: #c4dcd6; font-size: 12px; }

  .ribbon { height: 100px; flex: none; margin: 0 8px; background: #292929; border-radius: 8px; display: flex; }
  .group { flex: none; height: 92px; margin-top: 4px; border-right: 1px solid #444; display: flex; flex-direction: column; }
  .clip { width: 161px; }
  .items { height: 76px; flex: none; display: flex; }
  .gname { text-align: center; font-size: 10px; line-height: 16px; color: #fff; }
  .tool { flex: none; flex-direction: column; justify-content: flex-start; padding-top: 6px; }
  .tool span { height: 16px; display: flex; align-items: center; gap: 3px; }
  .tool svg + span { margin-top: 2px; }
  .off { color: #5c5c5c; }
  .paste { width: 52px; padding-left: 4px; }
  .stack { display: flex; flex-direction: column; }
  .stack button { height: 26px; flex: none; justify-content: flex-start; gap: 3px; }
  .collapse { margin: 84px 7px 0 auto; width: 13px; height: 8px; }

  main { flex: 1; display: grid; grid-template-columns: 41px 1fr 181px 184px; position: relative; border-bottom: 1px solid #666; min-height: 526px; }
  .rail { border-right: 1px solid #444; display: flex; flex-direction: column; }
  .rail button { height: 40px; border-left: 3px solid transparent; padding-right: 2px; }
  .rail .on { border-color: #2aab94; }
  .center { display: flex; flex-direction: column; min-width: 0; }
  .banner { height: 38px; background: #292929; border: 1px solid #8a8a8a; border-left: 0; display: flex; align-items: center; padding: 0 11px 0 14px; gap: 10px; color: #fff; }
  .banner .view { margin-left: auto; height: 24px; border: 1px solid #b5b5b5; padding: 0 17px; font-weight: 600; }
  .work { flex: 1; display: grid; grid-template-columns: 1fr 201px; background: #fff; }
  .canvas { position: relative; overflow: hidden; }
  .visual { position: absolute; height: 142px; padding: 3px; background: #fff; }
  .card { height: 100%; background: #c4c4c4; border: 1px solid #b8b8b8; border-radius: 16px; text-align: center; color: #252423; white-space: nowrap; overflow: hidden; padding-top: 36px; }
  .card.left { text-align: left; padding-left: 12px; }
  .value { font: italic 700 34px/48px "Comic Sans MS", Inter, sans-serif; font-variant-numeric: tabular-nums; padding-left: 4px; }
  .left .value { padding-left: 0; }
  .value.upright { font-style: normal; }
  .label { font: 900 12px/22px "Liberation Sans", Arial, sans-serif; color: #000; }
  .dark { color: #000; }
  .selected { box-shadow: inset 0 0 0 1px #333; }
  .handles { position: absolute; left: 0; top: 0; }
  .tools { position: absolute; right: 1px; top: -24px; display: flex; gap: 4px; }
  .tools button { width: 24px; height: 23px; background: #fff; }
  .report-title { position: absolute; left: 640px; top: 279px; width: 92px; text-align: center; font: 700 21px/26px "Comic Sans MS", Inter, sans-serif; color: #e667b4; white-space: nowrap; }
  .page-edge { position: absolute; left: 3px; right: 3px; top: 389px; border-top: 2px dotted #666; }

  .filters { border-left: 1px solid #b5b5b5; color: #2b2b2b; }
  .fsearch { padding: 7px 12px 4px 8px; border-bottom: 1px solid #b5b5b5; }
  .fsearch label { height: 31px; border: 1px solid #a5a5a5; border-radius: 2px; display: flex; align-items: center; gap: 14px; padding-left: 12px; font-size: 12px; }
  .fsearch input { width: 100px; }
  .fgroup { padding: 16px 8px 17px; display: flex; flex-direction: column; }
  .fgroup h3 { font-weight: 400; font-size: 11px; display: flex; justify-content: space-between; padding-right: 5px; line-height: 18px; margin-bottom: 7px; }
  .fcard { height: 46px; border: 1px solid #c0c0c0; border-radius: 2px; padding: 4px 8px; line-height: 18px; margin-bottom: 6px; }
  .drop { height: 46px; border: 1px solid #222; border-radius: 2px; }
  .fgroup + .fgroup { padding: 9px 8px 17px; }

  .pages { height: 35px; background: #292929; display: flex; color: #fff; }
  .layouts { width: 131px; flex: none; display: flex; border-right: 4px double #666; align-items: center; padding-left: 10px; }
  .layouts button { width: 24px; height: 30px; }
  .layouts button + button { margin-left: 20px; }
  .layouts button:nth-child(n+3) { width: 21px; margin-left: 0; }
  .layouts button:nth-child(3) { margin-left: 9px; }
  .layouts .on { box-shadow: inset 0 -3px #2aab94; }
  .page { flex: 77 1 0; border-right: 1px solid #484848; padding-top: 2px; }
  .page.long { flex-grow: 83; }
  .page.current { font-weight: 700; padding-top: 5px; border-bottom: 3px solid #2aab94; }
  .add { width: 39px; flex: none; background: #2aab94; }

  .viz, .data { border-left: 1px solid #666; min-width: 0; }
  .ptitle { height: 38px; display: flex; align-items: center; justify-content: space-between; padding: 0 10px 0 8px; color: #fff; }
  .ptitle h2 { font-size: 14px; font-weight: 700; }
  .viz h3 { font-size: 11px; font-weight: 600; color: #fff; padding-left: 8px; line-height: 16px; }
  .modes { height: 38px; display: flex; justify-content: space-between; padding: 3px 8px; }
  .modes button { width: 32px; }
  .modes .on { background: #292929; border-radius: 2px; }
  .rule { border-bottom: 1px solid #707070; display: flex; justify-content: center; height: 10px; }
  .vsearch { margin: 8px 8px 0; height: 28px; border: 1px solid #666; background: #292929; border-radius: 2px; display: flex; align-items: center; gap: 5px; padding-left: 7px; font-size: 12px; color: #fff; }
  .vtabs { display: flex; padding: 9px 18px 0 12px; gap: 15px; font-size: 13px; color: #fff; }
  .vtabs button { height: 32px; }
  .vtabs .on { font-weight: 700; box-shadow: inset 0 -2px #2aab94; }
  .vtabs .dots { margin-left: auto; }
  .sections { padding-top: 13px; }
  .sections button { display: flex; width: 100%; height: 41px; justify-content: flex-start; gap: 7px; padding-left: 11px; font-weight: 600; color: #fff; border-bottom: 1px solid #555; }

  .data { display: flex; flex-direction: column; }
  .dsearch { margin: 7px 4px 0; height: 25px; border: 1px solid #999; border-radius: 3px; background: #222; display: flex; align-items: center; gap: 7px; padding-left: 12px; color: #8c8c8c; font-size: 12px; flex: none; }
  .list { margin-top: 7px; flex: 1 1 0; min-height: 0; overflow: hidden; display: flex; flex-direction: column; justify-content: flex-end; position: relative; padding-bottom: 1px; }
  .field, .table-row { height: 24px; flex: none; display: flex; align-items: center; font-weight: 600; color: #e2e2e2; white-space: nowrap; }
  .field { padding-left: 44px; gap: 8px; }
  .field span { margin-left: -2px; }
  .field input { appearance: none; width: 12px; height: 12px; border: 1px solid #a5a5a5; border-radius: 2px; }
  .field input:checked { background: #2aab94; border-color: #2aab94; position: relative; }
  .field input:checked::after { content: ""; position: absolute; left: 1px; top: 1px; width: 7px; height: 4px; border: solid #14594d; border-width: 0 0 1px 1px; transform: rotate(-45deg); }
  .table-row { justify-content: flex-start; padding-left: 16px; gap: 7px; }
  .thumb { position: absolute; right: 4px; bottom: 21px; width: 8px; height: 171px; background: #444; }

  .watermark { position: absolute; left: 1073px; bottom: 8px; color: rgba(160, 160, 160, .65); font-size: 14px; line-height: 20px; white-space: nowrap; pointer-events: none; z-index: 10; }
  .watermark b { display: block; font-weight: 400; font-size: 19px; line-height: 26px; }

  .status { height: 24px; flex: none; display: flex; align-items: center; justify-content: space-between; padding: 0 18px 0 4px; border-bottom: 1px solid #000; }
  .zoom { display: flex; align-items: center; gap: 6px; }
  .zoom span { margin-left: 6px; }
  .zoom span + button { margin-left: 14px; }
  .zoom input { appearance: none; width: 100px; height: 14px; margin-right: 2px; background: linear-gradient(#ddd, #ddd) 0 50% / 100% 1px no-repeat, linear-gradient(#ddd, #ddd) 50% 50% / 1px 5px no-repeat; }
  .zoom input::-webkit-slider-thumb { appearance: none; width: 4px; height: 11px; background: #ddd; }

  .taskbar { height: 48px; flex: none; display: flex; justify-content: center; position: relative; color: #1b1b1b; background: linear-gradient(90deg, #e3eef5 0, #e0edf8 17%, #d3e2fa 24%, #d9d9f3 36%, #dfe3f5 48%, #d2e0f9 60%, #d6e1f8 72%, #dcdcf0 75%, #deebf8 83%, #e4eff8 100%); }
  .apps { display: flex; align-items: center; gap: 4px; }
  .apps button { width: 40px; height: 40px; border-radius: 4px; }
  .apps .running { background: rgba(255, 255, 255, .65); border-bottom: 3px solid #1a6fc4; border-image: linear-gradient(90deg, transparent 30%, #1a6fc4 30% 70%, transparent 70%) 1; }
  .tray { position: absolute; right: 24px; top: 0; height: 48px; display: flex; align-items: center; gap: 9px; }
  .stacked { display: flex; flex-direction: column; text-align: center; line-height: 17px; }
  .clock { width: 62px; line-height: 16px; margin-left: 4px; margin-right: 8px; }
</style>
